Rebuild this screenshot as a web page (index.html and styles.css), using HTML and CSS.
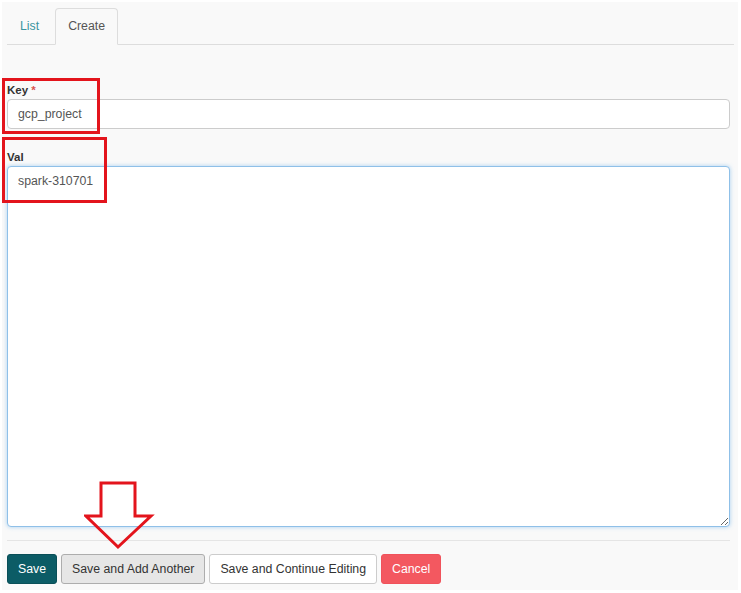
FILE: index.html
```html
<!DOCTYPE html>
<html lang="en">
<head>
    <meta charset="UTF-8">
    <title>Variables - Create</title>
    <link rel="stylesheet" href="styles.css">
</head>
<body>
    <div class="page">
        <ul class="nav-tabs">
            <li><a href="#">List</a></li>
            <li class="active"><a href="#">Create</a></li>
        </ul>
        <form class="form">
            <div class="field">
                <label for="key">Key <span class="req">*</span></label>
                <input id="key" type="text" value="gcp_project">
            </div>
            <div class="field field-last">
                <label for="val">Val</label>
                <textarea id="val" class="focused">spark-310701</textarea>
            </div>
            <hr>
            <div class="actions">
                <button type="button" class="btn btn-primary">Save</button>
                <button type="button" class="btn btn-pressed">Save and Add Another</button>
                <button type="button" class="btn">Save and Continue Editing</button>
                <button type="button" class="btn btn-danger">Cancel</button>
            </div>
        </form>

        <!-- annotations drawn over the screenshot -->
        <div class="mark mark-key"></div>
        <div class="mark mark-val"></div>
        <svg class="arrow" width="72" height="72" viewBox="0 0 72 72">
            <polygon points="17,2 51,2 51,35 67,35 34,66 2,35 17,35" fill="none" stroke="#e3141c" stroke-width="3"/>
        </svg>
    </div>
</body>
</html>
```

FILE: styles.css
```css
html {
    background: #fff;
}
body {
    margin: 2px 3px 3px 2px;
    height: 588px;
    background: #f9f9f9;
    font-family: "Liberation Sans", Arial, sans-serif;
    font-size: 12.3px;
    color: #333;
}
.page {
    position: relative;
    height: 100%;
}

/* tabs */
.nav-tabs {
    list-style: none;
    margin: 0 4px 0 5px;
    padding: 6px 0 0;
    display: flex;
    border-bottom: 1px solid #ddd;
}
.nav-tabs li {
    margin-right: 3px;
    margin-bottom: -1px;
}
.nav-tabs a {
    display: block;
    padding: 7px 12px 8px;
    line-height: 20px;
    border: 1px solid transparent;
    border-radius: 4px 4px 0 0;
    color: #3a949f;
    text-decoration: none;
}
.nav-tabs .active a {
    color: #555;
    background: #f9f9f9;
    border-color: #ddd #ddd transparent;
}

/* form */
.form {
    margin: 37px 0 0 5px;
    width: 723px;
}
.field {
    margin-bottom: 20px;
}
.field-last {
    margin-bottom: 0;
}
.field label {
    display: block;
    font-weight: bold;
    font-size: 11.5px;
    line-height: 16px;
    margin-bottom: 1px;
    color: #333;
}
.req {
    color: #d9534f;
}
.field input,
.field textarea {
    display: block;
    box-sizing: border-box;
    width: 100%;
    padding: 6px 10px;
    font-family: inherit;
    font-size: 12.3px;
    color: #555;
    background: #fff;
    border: 1px solid #ccc;
    border-radius: 4px;
}
.field input {
    height: 30px;
}
.field textarea {
    height: 361px;
    line-height: 18px;
    padding-top: 5px;
}
.field textarea.focused {
    border-color: #8fc0e8;
    box-shadow: 0 0 4px rgba(102, 175, 233, 0.55);
}
hr {
    margin: 13px 0;
    border: 0;
    border-top: 1px solid #e5e5e5;
}

/* buttons */
.actions {
    display: flex;
    gap: 4px;
}
.btn {
    height: 30px;
    padding: 0 10px;
    font-family: inherit;
    font-size: 12.3px;
    color: #333;
    background: #fff;
    border: 1px solid #ccc;
    border-radius: 3px;
    cursor: pointer;
}
.btn-primary {
    background: #0c5c66;
    border-color: #0a4f58;
    color: #fff;
}
.btn-pressed {
    background: #e6e6e6;
    border-color: #adadad;
}
.btn-danger {
    background: #f35860;
    border-color: #f0525b;
    color: #fff;
}

/* red annotations */
.mark {
    position: absolute;
    box-sizing: border-box;
    border: 3px solid #e3141c;
}
.mark-key {
    left: 0;
    top: 76px;
    width: 98px;
    height: 56px;
}
.mark-val {
    left: 0;
    top: 135px;
    width: 105px;
    height: 66px;
}
.arrow {
    position: absolute;
    left: 82px;
    top: 479px;
}
```
